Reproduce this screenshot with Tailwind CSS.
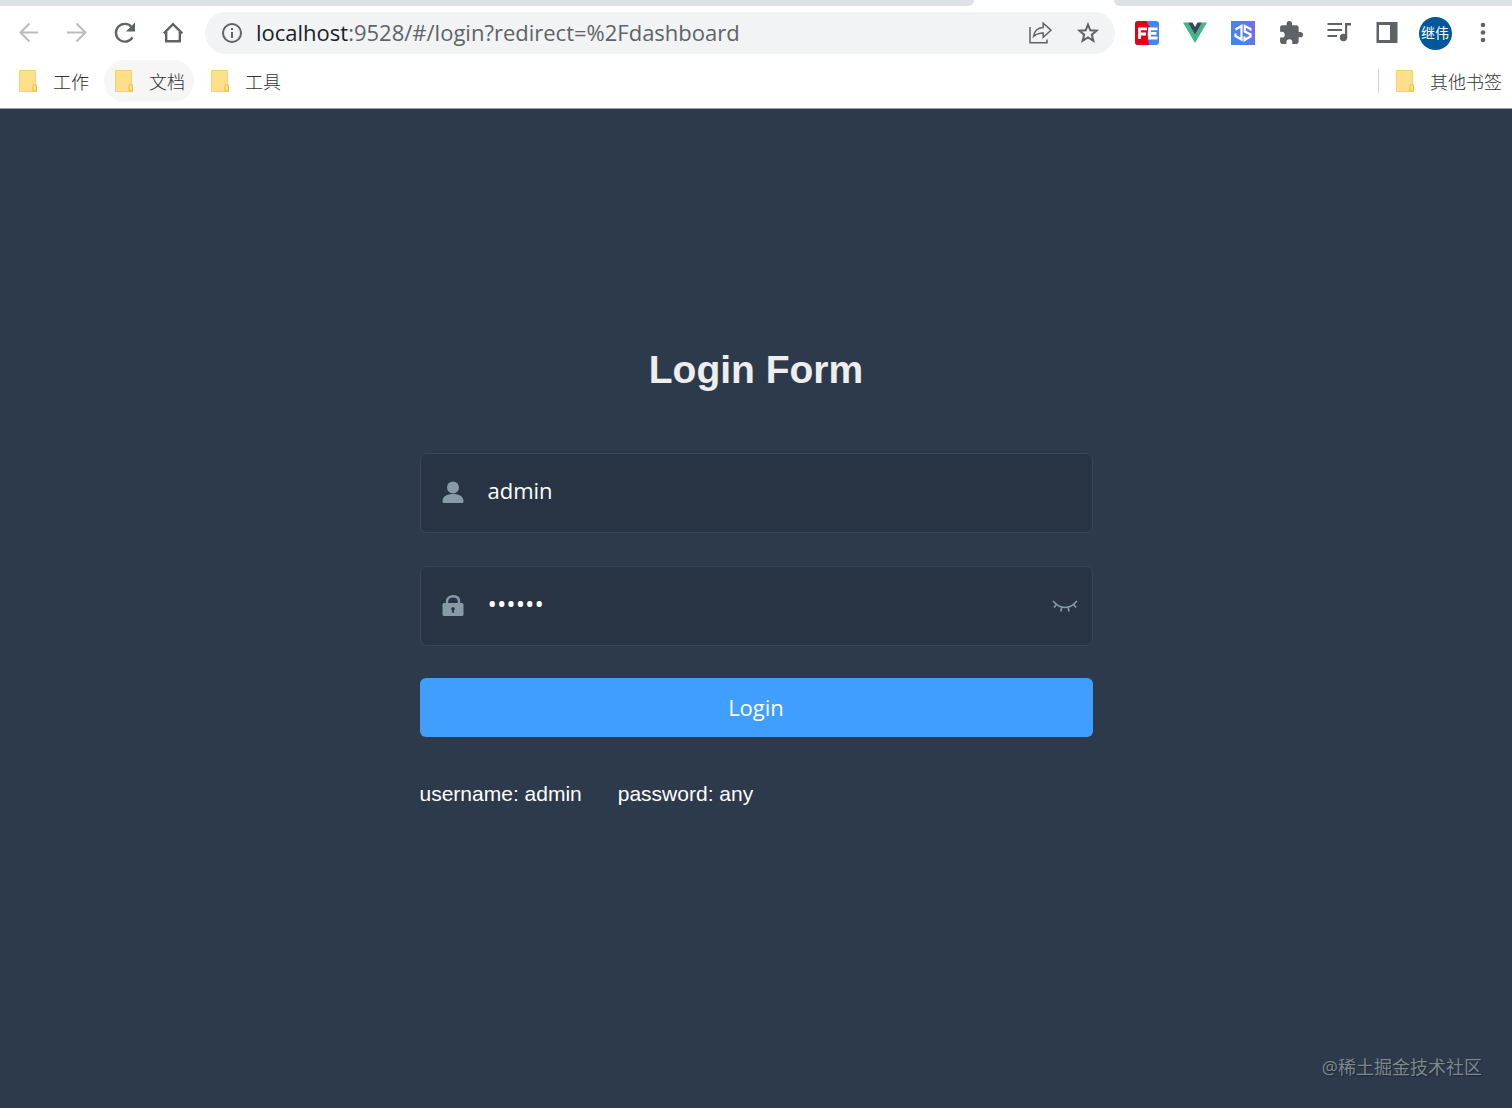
<!DOCTYPE html>
<html lang="zh-CN">
<head>
  <meta charset="UTF-8" />
  <meta name="viewport" content="width=device-width, initial-scale=1.0" />
  <title>Login Form</title>
  <script src="https://cdn.jsdelivr.net/npm/@tailwindcss/browser@4"></script>
</head>
<body class="min-h-screen flex flex-col bg-[#2d3a4b] font-['Open_Sans','Noto_Sans_CJK_SC',sans-serif]">

  <!-- Browser chrome -->
  <header class="bg-white border-b border-[#9aa3ab]">
    <!-- Bottom edge of the tab strip -->
    <div class="flex h-[6px] bg-white">
      <div class="w-[974px] bg-[#dee1e6] rounded-br-lg"></div>
      <div class="w-[140px]"></div>
      <div class="flex-1 bg-[#dee1e6] rounded-bl-lg"></div>
    </div>

    <!-- Toolbar -->
    <div class="flex items-center pl-[5px] pr-[5px] pt-[6px] text-[#5f6368]">
      <button type="button" aria-label="Back" class="w-12 flex justify-center text-[#babcbe]">
        <svg class="size-6" viewBox="0 0 24 24" fill="none" stroke="currentColor" stroke-width="2"><path d="M21 11.500H4M12.500 2.500L3.500 11.500L12.500 20.500" /></svg>
      </button>
      <button type="button" aria-label="Forward" class="w-12 flex justify-center text-[#babcbe]">
        <svg class="size-6" viewBox="0 0 24 24" fill="none" stroke="currentColor" stroke-width="2"><path d="M2 11.500H20M11.500 2.500L20.500 11.500L11.500 20.500" /></svg>
      </button>
      <button type="button" aria-label="Reload" class="w-12 flex justify-center">
        <svg class="size-6" viewBox="0 0 24 24"><path d="M19.500 16.300A8.900 8.900 0 1 1 18.400 5.700" fill="none" stroke="currentColor" stroke-width="2.400" /><path d="M22 1.500V10.500H13z" fill="currentColor" /></svg>
      </button>
      <button type="button" aria-label="Home" class="w-12 flex justify-center">
        <svg class="size-6" viewBox="0 0 24 24" fill="none" stroke="currentColor" stroke-width="2.400"><path d="M5.200 11V20.300H18.800V11M2.800 12.300L12 3.200L21.200 12.300" /></svg>
      </button>

      <div class="ml-2 flex-1 flex items-center h-[42px] rounded-full bg-[#f1f3f4] pl-4 pr-[15px]">
        <svg class="size-[22px]" viewBox="0 0 22 22"><circle cx="11" cy="11" r="9" fill="none" stroke="currentColor" stroke-width="2" /><path d="M10 10h2v6h-2zM10 6h2v2h-2z" fill="currentColor" /></svg>
        <a href="#/login" class="ml-[13px] pb-[2px] text-[22px] leading-[30px]"><span class="text-[#202124]">localhost</span>:9528/#/login?redirect=%2Fdashboard</a>
        <button type="button" aria-label="Share" class="ml-auto">
          <svg class="size-6" viewBox="0 0 24 24" fill="none" stroke="currentColor" stroke-width="1.500"><path d="M2 6V21.700H19V18.500" /><path d="M5.500 15.500C6.300 9.800 9.600 6.900 15.200 6.600V2.200L23 9.200L15.200 16.200V12C11 12 8.300 13 5.500 15.500z" /></svg>
        </button>
        <button type="button" aria-label="Bookmark this page" class="ml-6">
          <svg class="size-6" viewBox="0 0 24 24" fill="none" stroke="currentColor" stroke-width="2"><path d="M12 3.500L14.300 9.300L20.600 9.700L15.800 13.700L17.400 19.900L12 16.500L6.600 19.900L8.200 13.700L3.400 9.700L9.700 9.300z" /></svg>
        </button>
      </div>

      <button type="button" aria-label="FE Helper" class="ml-2 w-12 flex justify-center">
        <svg class="size-6" viewBox="0 0 24 24"><rect width="24" height="24" rx="3" fill="#4285f4" /><path d="M3 0H11.500L14.500 6L12 12L14 24H3A3 3 0 0 1 0 21V3A3 3 0 0 1 3 0z" fill="#e60012" /><path d="M4.500 18V7.800H12M4.500 13H11M22.500 7.800H14.500V17H22.500M14.500 12.400H21.500" fill="none" stroke="#fff" stroke-width="2.800" /></svg>
      </button>
      <button type="button" aria-label="Vue Devtools" class="w-12 flex justify-center">
        <svg class="size-6" viewBox="0 0 24 24"><path d="M0 1.500H5L12 14L19 1.500H24L12 22z" fill="#41b883" /><path d="M5 1.500H9.500L12 6L14.500 1.500H19L12 14z" fill="#35495e" /></svg>
      </button>
      <button type="button" aria-label="JS extension" class="w-12 flex justify-center">
        <svg class="size-6" viewBox="0 0 24 24"><defs><linearGradient id="js" x1="0" y1="0.300" x2="1" y2="0"><stop offset="0" stop-color="#4285f4" /><stop offset="1" stop-color="#766ee8" /></linearGradient></defs><rect width="24" height="24" fill="url(#js)" /><path d="M4.500 8.500L10.500 5V18.500L4.500 15V12.500M19.500 9.500V8L13.800 5V10.500L19.500 13.500V15.500L13.500 19V15.500" fill="none" stroke="#fff" stroke-width="2.200" /></svg>
      </button>
      <button type="button" aria-label="Extensions" class="w-12 flex justify-center">
        <svg class="size-6" viewBox="1 1 22 22" fill="currentColor"><path d="M20.500 11H19V7c0-1.100-.9-2-2-2h-4V3.500a2.500 2.500 0 0 0-5 0V5H4c-1.100 0-2 .9-2 2v3.800h1.500a2.700 2.700 0 0 1 0 5.400H2V20c0 1.100.9 2 2 2h3.800v-1.500a2.700 2.700 0 0 1 5.400 0V22H17c1.100 0 2-.9 2-2v-4h1.500a2.500 2.500 0 0 0 0-5z" /></svg>
      </button>
      <button type="button" aria-label="Media controls" class="w-12 flex justify-center">
        <svg class="size-6" viewBox="0 0 24 24"><path d="M0.500 3H15M0.500 9H15M0.500 15H10" fill="none" stroke="currentColor" stroke-width="2" /><circle cx="16.500" cy="16.500" r="3.700" fill="currentColor" /><path d="M18 17V2H24V4.500H20.200V17z" fill="currentColor" /></svg>
      </button>
      <button type="button" aria-label="Side panel" class="w-12 flex justify-center">
        <svg class="size-6" viewBox="0 0 24 24"><path fill-rule="evenodd" d="M1.500 1H22.500V22H1.500zM4 4V19H15V4z" fill="currentColor" /></svg>
      </button>
      <button type="button" aria-label="Profile" class="w-12 flex justify-center">
        <span class="size-[33px] rounded-full bg-[#01579b] text-white text-[14px] leading-[31px]">继伟</span>
      </button>
      <button type="button" aria-label="Menu" class="w-12 flex justify-center">
        <svg class="size-6" viewBox="0 0 24 24" fill="currentColor"><circle cx="12" cy="4" r="2.300" /><circle cx="12" cy="11.500" r="2.300" /><circle cx="12" cy="19" r="2.300" /></svg>
      </button>
    </div>

    <!-- Bookmarks bar -->
    <nav class="flex items-center gap-[6px] pl-2 pr-px py-[6px] text-[18px] text-[#303336] font-light">
      <a href="#" class="flex items-center gap-4 h-[42px] pl-[11px] pr-[9px] rounded-full">
        <svg class="w-[18px] h-[22px]" viewBox="0 0 18 22"><path d="M0.500 0.500H16.500V14L17.500 15V21.500H0.500z" fill="#ffe08a" stroke="#f8d269" /><path d="M14 21V16Q14 14.500 15.500 14.500T17.500 16V21z" fill="#ffe08a" stroke="#edbd3c" /></svg>
        <span class="pt-[2px]">工作</span>
      </a>
      <a href="#" class="flex items-center gap-4 h-[42px] pl-[11px] pr-[9px] rounded-full bg-[#f6f6f7]">
        <svg class="w-[18px] h-[22px]" viewBox="0 0 18 22"><path d="M0.500 0.500H16.500V14L17.500 15V21.500H0.500z" fill="#ffe08a" stroke="#f8d269" /><path d="M14 21V16Q14 14.500 15.500 14.500T17.500 16V21z" fill="#ffe08a" stroke="#edbd3c" /></svg>
        <span class="pt-[2px]">文档</span>
      </a>
      <a href="#" class="flex items-center gap-4 h-[42px] pl-[11px] pr-[9px] rounded-full">
        <svg class="w-[18px] h-[22px]" viewBox="0 0 18 22"><path d="M0.500 0.500H16.500V14L17.500 15V21.500H0.500z" fill="#ffe08a" stroke="#f8d269" /><path d="M14 21V16Q14 14.500 15.500 14.500T17.500 16V21z" fill="#ffe08a" stroke="#edbd3c" /></svg>
        <span class="pt-[2px]">工具</span>
      </a>
      <span class="ml-auto w-px h-6 bg-[#d0d3d8]"></span>
      <a href="#" class="flex items-center gap-4 h-[42px] pl-[11px] pr-[9px] rounded-full">
        <svg class="w-[18px] h-[22px]" viewBox="0 0 18 22"><path d="M0.500 0.500H16.500V14L17.500 15V21.500H0.500z" fill="#ffe08a" stroke="#f8d269" /><path d="M14 21V16Q14 14.500 15.500 14.500T17.500 16V21z" fill="#ffe08a" stroke="#edbd3c" /></svg>
        <span class="pt-[2px]">其他书签</span>
      </a>
    </nav>
  </header>

  <!-- Login page -->
  <main class="flex-1 flex flex-col px-4 pt-[238px]">
    <form id="loginForm" class="w-full max-w-[673px] mx-auto">
      <h1 class="text-center text-[39px] leading-[45px] font-bold text-[#eee] font-['Liberation_Sans',sans-serif]">Login Form</h1>

      <div class="mt-[61px] flex items-center h-20 rounded-[7px] border border-[#394656] bg-[#283443]">
        <label for="username" class="pl-5 text-[#889aa4]">
          <svg role="img" aria-label="Username" class="size-6" viewBox="0 0 24 24" fill="currentColor"><circle cx="12" cy="6.500" r="6" /><path d="M1.500 20.500C1.500 15 6 13 12 13S22.500 15 22.500 20.500Q22.500 22 21 22H3Q1.500 22 1.500 20.500z" /></svg>
        </label>
        <input id="username" type="text" value="admin" class="flex-1 min-w-0 h-[70px] pl-[23px] pb-[6px] bg-transparent text-[22px] text-white outline-none" />
      </div>

      <div class="mt-[33px] flex items-center h-20 rounded-[7px] border border-[#394656] bg-[#283443]">
        <label for="password" class="pl-5 text-[#889aa4]">
          <svg role="img" aria-label="Password" class="size-6" viewBox="0 0 24 24"><path d="M6 10V7.500C6 4 8.500 2.300 12 2.300S18 4 18 7.500V10" fill="none" stroke="currentColor" stroke-width="2.400" /><path fill-rule="evenodd" d="M3 9H21Q22.500 9 22.500 10.500V20.500Q22.500 22 21 22H3Q1.500 22 1.500 20.500V10.500Q1.500 9 3 9zM12 13A2 2 0 0 0 11.200 16.700V19H12.800V16.700A2 2 0 0 0 12 13z" fill="currentColor" /></svg>
        </label>
        <input id="password" type="password" value="111111" class="flex-1 min-w-0 h-[70px] pl-[23px] pb-[6px] bg-transparent text-[25px] text-white outline-none" />
        <button id="togglePwd" type="button" aria-label="Show password" class="mr-[14px] text-[#889aa4]">
          <svg class="w-[26px] h-6" viewBox="0 0 26 24" fill="none" stroke="currentColor" stroke-width="1.600"><path d="M1 7Q6.500 13.500 13 13.500T25 7M4.500 10.500L2 13.500M9.800 13L8.800 17.500M16 13L17 17.500M21.500 10.500L24 13.500" /></svg>
        </button>
      </div>

      <button type="submit" class="mt-8 w-full h-[59px] rounded-[6px] bg-[#409eff] text-white text-[22px]">Login</button>

      <div class="mt-[45px] flex gap-9 text-[21px] leading-6 text-white font-['Liberation_Sans',sans-serif]">
        <span>username: admin</span>
        <span>password: any</span>
      </div>
    </form>

    <p class="mt-auto self-end pr-[14px] pb-[27px] text-[18px] leading-[27px] text-[#7d8791] [text-shadow:1px_1px_1px_#1d2733]">@稀土掘金技术社区</p>
  </main>

  <script>
    // Show or hide the password
    document.getElementById('togglePwd').addEventListener('click', function () {
      const input = document.getElementById('password');
      input.type = input.type === 'password' ? 'text' : 'password';
    });

    document.getElementById('loginForm').addEventListener('submit', function (e) {
      e.preventDefault();
    });
  </script>
</body>
</html>
